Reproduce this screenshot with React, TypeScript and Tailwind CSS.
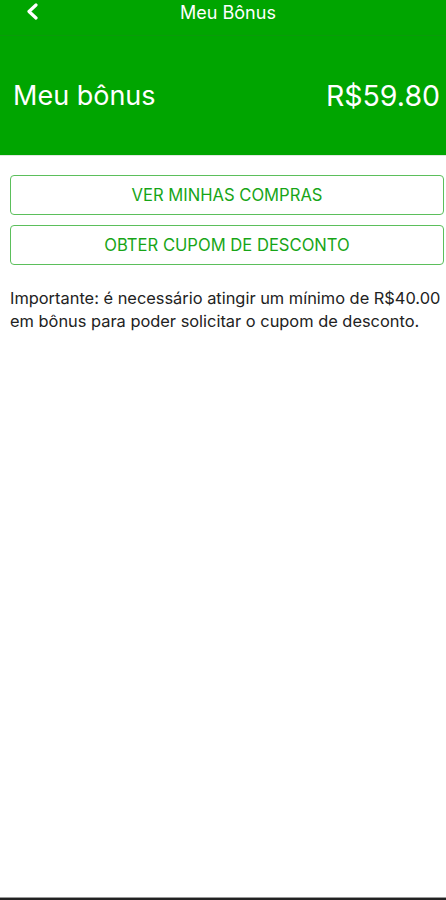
export default function App() {
  return (
    <div
      className="relative w-[446px] h-[900px] bg-white overflow-hidden"
      style={{ fontFamily: 'Inter, "Liberation Sans", Arial, sans-serif' }}
    >
      {/* header */}
      <div className="bg-[#00a500] h-[156px] border-b border-[#dfe8df]">
        <div className="relative h-[36px] border-b border-[#0a9a0a] flex items-center justify-center">
          <svg
            className="absolute left-[25px] top-[3px]"
            width="15"
            height="17"
            viewBox="0 0 15 17"
            fill="none"
          >
            <path d="M11 2 L4 8.5 L11 15" stroke="white" strokeWidth="3.2" strokeLinecap="round" strokeLinejoin="round" />
          </svg>
          <span className="text-white text-[18px] -mt-[11px] ml-[10px]">Meu Bônus</span>
        </div>
        <div className="flex items-center justify-between pl-[13px] pr-[6px] h-[120px]">
          <span className="text-white text-[27px]">Meu bônus</span>
          <span className="text-white text-[28.5px]">R$59.80</span>
        </div>
      </div>

      {/* actions */}
      <div className="flex flex-col gap-[10px] pl-[10px] pr-[2px] pt-[19px]">
        <button className="h-[40px] w-full rounded-[4px] border border-[#5bbf5b] text-[#17a517] text-[16.6px]">
          VER MINHAS COMPRAS
        </button>
        <button className="h-[40px] w-full rounded-[4px] border border-[#5bbf5b] text-[#17a517] text-[16.6px]">
          OBTER CUPOM DE DESCONTO
        </button>
      </div>

      <p className="pl-[10px] pr-[2px] pt-[22px] text-[16.4px] leading-[23px] text-[#222]">
        Importante: é necessário atingir um mínimo de R$40.00 em bônus para poder solicitar o cupom de desconto.
      </p>

      <div className="absolute bottom-0 left-0 right-0 h-[3px] bg-[#222] border-t border-[#999]" />
    </div>
  )
}
